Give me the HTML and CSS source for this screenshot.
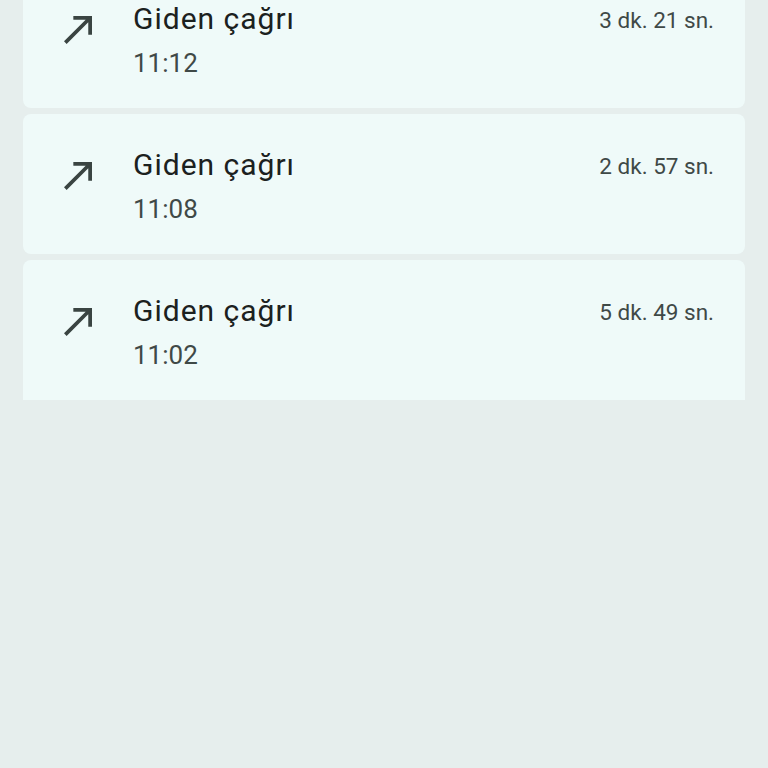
FILE: index.html
```html
<!DOCTYPE html>
<html lang="tr">
<head>
<meta charset="utf-8">
<link rel="stylesheet" href="styles.css">
</head>
<body>
<div class="list">
  <div class="card">
    <svg class="icon" viewBox="4 5 15 15" width="28" height="28"><path d="M9 5v2h6.59L4 18.59 5.41 20 17 8.41V15h2V5z"/></svg>
    <div class="info">
      <div class="title">Giden çağrı</div>
      <div class="time">11:12</div>
    </div>
    <div class="dur">3 dk. 21 sn.</div>
  </div>
  <div class="card">
    <svg class="icon" viewBox="4 5 15 15" width="28" height="28"><path d="M9 5v2h6.59L4 18.59 5.41 20 17 8.41V15h2V5z"/></svg>
    <div class="info">
      <div class="title">Giden çağrı</div>
      <div class="time">11:08</div>
    </div>
    <div class="dur">2 dk. 57 sn.</div>
  </div>
  <div class="card last">
    <svg class="icon" viewBox="4 5 15 15" width="28" height="28"><path d="M9 5v2h6.59L4 18.59 5.41 20 17 8.41V15h2V5z"/></svg>
    <div class="info">
      <div class="title">Giden çağrı</div>
      <div class="time">11:02</div>
    </div>
    <div class="dur">5 dk. 49 sn.</div>
  </div>
</div>
</body>
</html>
```
FILE: styles.css
```css
html, body {
  margin: 0;
  padding: 0;
  background: #e6eeed;
  height: 100%;
  overflow: hidden;
  font-family: Roboto, "Noto Sans", sans-serif;
}
.list {
  margin-top: -32px;
  padding: 0 23px;
  display: flex;
  flex-direction: column;
  gap: 6px;
}
.card {
  background: #effaf9;
  border-radius: 8px;
  height: 140px;
  box-sizing: border-box;
  display: flex;
  align-items: flex-start;
  padding: 31px 31px 0 41px;
}
.card.last {
  border-radius: 8px 8px 0 0;
}
.icon {
  fill: #3a4442;
  margin-top: 17px;
  flex: none;
}
.info {
  margin-left: 41px;
  flex: 1;
}
.title {
  font-size: 30px;
  letter-spacing: 1px;
  line-height: 40px;
  color: #1b2120;
}
.time {
  font-size: 26px;
  line-height: 36px;
  margin-top: 6px;
  color: #3f4947;
}
.dur {
  font-size: 22.5px;
  line-height: 30px;
  margin-top: 6px;
  color: #3f4947;
}
```
